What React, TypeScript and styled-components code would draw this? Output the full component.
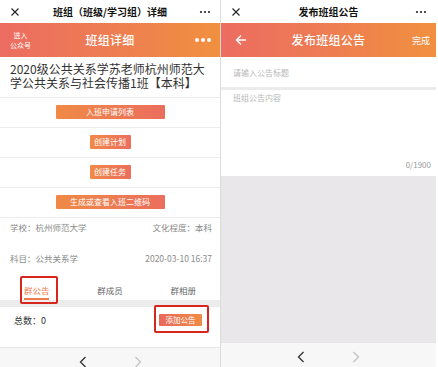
import React from "react";
import styled, { createGlobalStyle } from "styled-components";

const Global = createGlobalStyle`
  html, body { margin: 0; padding: 0; background: #fff; }
  body { font-family: "Noto Sans CJK SC", "Noto Sans", sans-serif; color: #333; }
  * { box-sizing: border-box; }
`;

const Page = styled.div`
  display: flex;
  height: 367px;
  overflow: hidden;
  background: #fff;
`;

const Phone = styled.div<{ $w: number }>`
  width: ${(p) => p.$w}px;
  display: flex;
  flex-direction: column;
  flex: none;
  background: #fff;
  & > * {
    flex-shrink: 0;
  }
`;

const Divider = styled.div`
  width: 1px;
  background: #dcdcdc;
  flex: none;
`;

const NavBar = styled.div`
  height: 23px;
  display: grid;
  grid-template-columns: 30px 1fr 30px;
  align-items: center;
  background: #fff;
`;

const NavTitle = styled.div`
  text-align: center;
  font-size: 10px;
  font-weight: 700;
  color: #111;
  line-height: 12px;
  white-space: nowrap;
`;

const NavIcon = styled.div`
  display: flex;
  align-items: center;
  justify-content: center;
`;

const Header = styled.div`
  height: 34px;
  display: grid;
  grid-template-columns: 40px 1fr 40px;
  align-items: center;
  background: linear-gradient(90deg, #ec6c61 0%, #ee7d52 50%, #f0903f 100%);
  color: #fff;
`;

const HeaderTitle = styled.div`
  text-align: center;
  font-size: 12px;
  line-height: 14px;
  font-weight: 500;
  letter-spacing: 0.3px;
`;

const SubLink = styled.div`
  font-size: 7px;
  line-height: 10px;
  text-align: center;
  padding-left: 1px;
`;

const HeaderAction = styled.div<{ $end?: boolean }>`
  display: flex;
  justify-content: ${(p) => (p.$end ? "flex-end" : "center")};
  align-items: center;
  padding-right: ${(p) => (p.$end ? 6 : 0)}px;
`;

const Dots = styled.div`
  display: flex;
  gap: 2px;
  padding-left: 6px;
  span {
    width: 4px;
    height: 4px;
    border-radius: 50%;
    background: #fff;
  }
`;

const ClassTitle = styled.div`
  padding: 5px 10px 7px 10px;
  font-size: 12px;
  line-height: 14px;
  color: #333;
  border-bottom: 1px solid #ececec;
`;

const ActionRow = styled.div`
  height: 30px;
  display: flex;
  align-items: center;
  justify-content: center;
  border-bottom: 1px solid #ececec;
  padding-bottom: 1px;
`;

const GradButton = styled.div<{ $wide?: boolean }>`
  width: ${(p) => (p.$wide ? 109 : 41)}px;
  height: 14px;
  border-radius: 1px;
  background: linear-gradient(90deg, #f08a46, #eb6e5d);
  color: #fff;
  font-size: 8px;
  line-height: 14px;
  text-align: center;
  white-space: nowrap;
`;

const InfoBlock = styled.div`
  padding: 3px 8px 14px 10px;
  display: flex;
  flex-direction: column;
  gap: 19px;
`;

const InfoRow = styled.div`
  display: flex;
  justify-content: space-between;
  font-size: 8.5px;
  line-height: 12px;
  color: #8a8a8a;
  white-space: nowrap;
`;

const Tabs = styled.div`
  height: 22px;
  display: grid;
  grid-template-columns: repeat(3, 1fr);
`;

const Tab = styled.div<{ $active?: boolean }>`
  position: relative;
  display: flex;
  justify-content: center;
  padding-top: 6px;
  font-size: 8.5px;
  line-height: 12px;
  color: ${(p) => (p.$active ? "#ee7a4c" : "#666")};
`;

const TabLabel = styled.span<{ $active?: boolean }>`
  position: relative;
  height: 16px;
  border-bottom: ${(p) => (p.$active ? "2px solid #ee7a4c" : "none")};
`;

const Highlight = styled.div<{ $t: number; $l: number; $w: number; $h: number }>`
  position: absolute;
  top: ${(p) => p.$t}px;
  left: ${(p) => p.$l}px;
  width: ${(p) => p.$w}px;
  height: ${(p) => p.$h}px;
  border: 2px solid #d9261c;
  border-radius: 2px;
  pointer-events: none;
`;

const GrayBand = styled.div<{ $h: number; $c?: string }>`
  height: ${(p) => p.$h}px;
  background: ${(p) => p.$c ?? "#ececec"};
`;

const TotalRow = styled.div`
  height: 26px;
  display: flex;
  align-items: center;
  justify-content: space-between;
  padding: 0 18px 0 14px;
  font-size: 9px;
  color: #333;
`;

const AddButton = styled.div`
  position: relative;
  width: 43px;
  height: 12px;
  border-radius: 1px;
  background: linear-gradient(90deg, #e9685c, #f08b45);
  color: #fff;
  font-size: 7.5px;
  line-height: 12px;
  text-align: center;
  white-space: nowrap;
`;

const Spacer = styled.div<{ $h: number }>`
  height: ${(p) => p.$h}px;
`;

const BottomBar = styled.div`
  height: 30px;
  background: #f7f7f7;
  border-top: 1px solid #e6e6e6;
  display: flex;
  justify-content: center;
  gap: 47px;
  padding-top: 8px;
`;

const InputRow = styled.div`
  height: 30px;
  padding: 0 12px;
  display: flex;
  align-items: center;
  font-size: 8px;
  color: #b8b8b8;
`;

const ContentArea = styled.div`
  height: 86px;
  padding: 2px 12px 5px 12px;
  display: flex;
  flex-direction: column;
  justify-content: space-between;
  font-size: 8px;
  line-height: 12px;
  color: #b8b8b8;
`;

const Counter = styled.div`
  align-self: flex-end;
  color: #9a9a9a;
  font-size: 8px;
  margin-right: -7px;
`;

const Done = styled.div`
  font-size: 9px;
  color: #fff;
`;

const CloseIcon = () => (
  <svg width="10" height="10" viewBox="0 0 10 10">
    <path d="M1.5 1.5 L8.5 8.5 M8.5 1.5 L1.5 8.5" stroke="#222" strokeWidth="1.1" />
  </svg>
);

const MoreIcon = () => (
  <svg width="12" height="4" viewBox="0 0 12 4">
    <circle cx="2" cy="2" r="1.1" fill="#222" />
    <circle cx="6" cy="2" r="1.1" fill="#222" />
    <circle cx="10" cy="2" r="1.1" fill="#222" />
  </svg>
);

const Chevron = ({ dir, color }: { dir: "l" | "r"; color: string }) => (
  <svg width="8" height="12" viewBox="0 0 8 12">
    <path
      d={dir === "l" ? "M6.5 1 L1.5 6 L6.5 11" : "M1.5 1 L6.5 6 L1.5 11"}
      stroke={color}
      strokeWidth="1.3"
      fill="none"
    />
  </svg>
);

const BackArrow = () => (
  <svg width="12" height="12" viewBox="0 0 12 12">
    <path d="M11 6 H1.5 M6 1.5 L1.5 6 L6 10.5" stroke="#fff" strokeWidth="1.4" fill="none" />
  </svg>
);

export default function App() {
  return (
    <>
      <Global />
      <Page>
        <Phone $w={220}>
          <NavBar>
            <NavIcon>
              <CloseIcon />
            </NavIcon>
            <NavTitle>班组（班级/学习组）详细</NavTitle>
            <NavIcon>
              <MoreIcon />
            </NavIcon>
          </NavBar>
          <Header>
            <SubLink>
              进入
              <br />
              公众号
            </SubLink>
            <HeaderTitle>班组详细</HeaderTitle>
            <HeaderAction>
              <Dots>
                <span />
                <span />
                <span />
              </Dots>
            </HeaderAction>
          </Header>
          <ClassTitle>2020级公共关系学苏老师杭州师范大学公共关系与社会传播1班【本科】</ClassTitle>
          <ActionRow>
            <GradButton $wide>入班申请列表</GradButton>
          </ActionRow>
          <ActionRow>
            <GradButton>创建计划</GradButton>
          </ActionRow>
          <ActionRow>
            <GradButton>创建任务</GradButton>
          </ActionRow>
          <ActionRow>
            <GradButton $wide>生成或查看入班二维码</GradButton>
          </ActionRow>
          <InfoBlock>
            <InfoRow>
              <span>学校：杭州师范大学</span>
              <span>文化程度：本科</span>
            </InfoRow>
            <InfoRow>
              <span>科目：公共关系学</span>
              <span>2020-03-10 16:37</span>
            </InfoRow>
          </InfoBlock>
          <Tabs>
            <Tab $active>
              <TabLabel $active>群公告</TabLabel>
              <Highlight $t={-2} $l={20} $w={38} $h={28} />
            </Tab>
            <Tab>
              <TabLabel>群成员</TabLabel>
            </Tab>
            <Tab>
              <TabLabel>群相册</TabLabel>
            </Tab>
          </Tabs>
          <GrayBand $h={7} />
          <TotalRow>
            <span>总数：0</span>
            <AddButton>
              添加公告
              <Highlight $t={-9} $l={-5} $w={55} $h={28} />
            </AddButton>
          </TotalRow>
          <Spacer $h={14} />
          <BottomBar>
            <Chevron dir="l" color="#333" />
            <Chevron dir="r" color="#c4c4c4" />
          </BottomBar>
        </Phone>
        <Divider />
        <Phone $w={215}>
          <NavBar>
            <NavIcon>
              <CloseIcon />
            </NavIcon>
            <NavTitle>发布班组公告</NavTitle>
            <NavIcon>
              <MoreIcon />
            </NavIcon>
          </NavBar>
          <Header>
            <HeaderAction>
              <BackArrow />
            </HeaderAction>
            <HeaderTitle>发布班组公告</HeaderTitle>
            <HeaderAction $end>
              <Done>完成</Done>
            </HeaderAction>
          </Header>
          <InputRow>请输入公告标题</InputRow>
          <GrayBand $h={3} $c="#ebebeb" />
          <ContentArea>
            <span>班组公告内容</span>
            <Counter>0/1900</Counter>
          </ContentArea>
          <GrayBand $h={166} $c="#e9e7ea" />
          <BottomBar>
            <Chevron dir="l" color="#333" />
            <Chevron dir="r" color="#c4c4c4" />
          </BottomBar>
        </Phone>
      </Page>
    </>
  );
}
